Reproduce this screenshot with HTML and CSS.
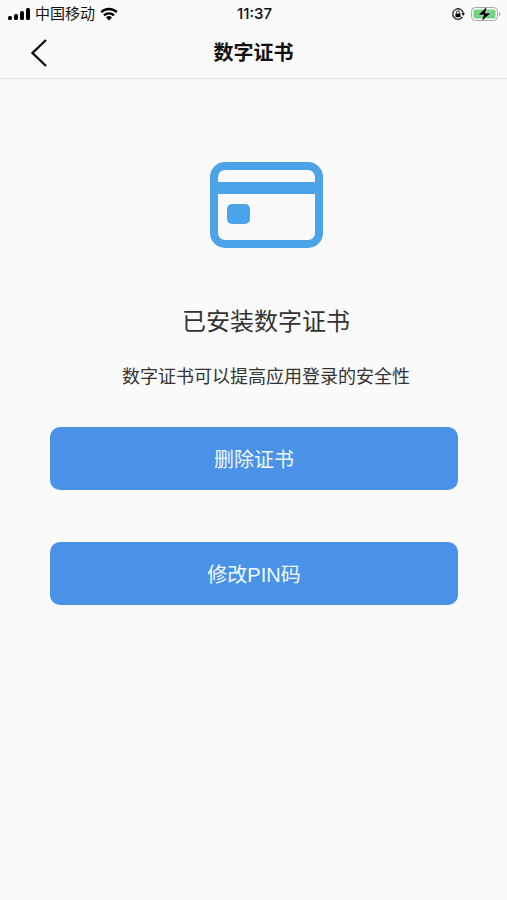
FILE: index.html
```html
<!DOCTYPE html>
<html lang="zh-CN">
<head>
  <meta charset="utf-8">
  <meta name="viewport" content="width=device-width, initial-scale=1.0">
  <title>数字证书</title>
  <link rel="stylesheet" href="styles.css">
</head>

<body>
  <header>
    <div class="status-bar">
      <div class="status-left">
        <svg width="22" height="14" viewBox="0 0 22 14" aria-hidden="true">
          <rect x="0" y="9" width="4" height="4" rx="1.5"/>
          <rect x="6" y="7" width="4" height="6" rx="1.5"/>
          <rect x="12" y="4" width="4" height="9" rx="1.5"/>
          <rect x="18" y="1" width="4" height="12" rx="1.5"/>
        </svg>
        <span class="carrier">中国移动</span>
        <svg width="18" height="14" viewBox="0 0 18 14" aria-hidden="true">
          <path d="M1.2 5.2A11.2 11.2 0 0 1 16.8 5.2M4 8.4A7.2 7.2 0 0 1 14 8.4" fill="none" stroke="#000" stroke-width="2.4"/>
          <path d="M9 13.4L6 10.4A4.3 4.3 0 0 1 12 10.4Z"/>
        </svg>
      </div>
      <span class="time">11:37</span>
      <div class="status-right">
        <svg width="14" height="14" viewBox="0 0 14 14" aria-hidden="true">
          <path d="M11.6 9.8A5.3 5.3 0 1 1 12.3 6.5" fill="none" stroke="#222" stroke-width="1.3"/>
          <path d="M10.4 6.2h3.6l-1.8 2.6z"/>
          <rect x="4.4" y="6.4" width="5.2" height="3.8" rx="0.5"/>
          <path d="M5.5 6.5V5.4a1.5 1.5 0 0 1 3 0v1.1" fill="none" stroke="#222"/>
        </svg>
        <svg width="30" height="16" viewBox="0 0 30 16" aria-hidden="true">
          <rect x="0.5" y="1.5" width="26" height="13" rx="4" fill="#fafafa" stroke="#a3a8a3"/>
          <rect x="2.5" y="3.5" width="22" height="9" rx="2" fill="#70d37e"/>
          <path d="M28 6v4q1.6-.6 1.6-2T28 6z" fill="#a3a8a3"/>
          <path d="M16 0.500L7 9h5.500L10.500 15.500L20 7h-5.500z" stroke="#fafafa" stroke-width="0.5"/>
        </svg>
      </div>
    </div>
    <nav>
      <button class="back" type="button" aria-label="返回">
        <svg width="18" height="30" viewBox="0 0 18 30" aria-hidden="true">
          <path d="M16 2L2.500 15L16 28" fill="none" stroke="#111" stroke-width="2.400"/>
        </svg>
      </button>
      <h1>数字证书</h1>
    </nav>
  </header>

  <main>
    <section class="certificate">
      <svg width="114" height="88" viewBox="0 0 114 88" aria-hidden="true">
        <rect x="5" y="5" width="105" height="78" rx="11" fill="none" stroke="#4ba3e8" stroke-width="8"/>
        <rect x="5" y="21" width="105" height="12" fill="#4ba3e8"/>
        <rect x="18" y="43" width="23" height="20" rx="5" fill="#4ba3e8"/>
      </svg>
      <h2>已安装数字证书</h2>
      <p>数字证书可以提高应用登录的安全性</p>
    </section>
    <div class="actions">
      <button class="action" type="button">删除证书</button>
      <button class="action" type="button">修改PIN码</button>
    </div>
  </main>
</body>
</html>
```

FILE: styles.css
```css
body {
  margin: 0;
  background-color: #fafafa;
  color: #333;
  font-family: "Liberation Sans", "Noto Sans CJK SC", sans-serif;
}

header {
  border-bottom: 1px solid #e5e5e5;
  color: #111;
}

.status-bar {
  display: grid;
  grid-template-columns: 1fr auto 1fr;
  align-items: center;
  height: 27px;
  padding: 0 6px 0 8px;
}

.status-left, .status-right {
  display: flex;
  align-items: center;
  gap: 5px;
}

.status-right {
  justify-content: flex-end;
  gap: 6px;
}

.carrier {
  font-size: 15px;
  line-height: 20px;
}

.time {
  font-family: Inter, sans-serif;
  font-size: 15px;
  font-weight: 500;
  line-height: 20px;
}

nav {
  display: grid;
  grid-template-columns: 60px 1fr 60px;
  align-items: center;
  height: 51px;
}

.back {
  display: flex;
  padding: 0 0 0 30px;
  border: 0;
  background: none;
}

h1, h2, p {
  margin: 0;
  text-align: center;
}

h1 {
  font-size: 20px;
  font-weight: 700;
  line-height: 28px;
}

.certificate {
  display: flex;
  flex-direction: column;
  align-items: center;
  padding: 82px 0 36px 25px;
}

h2 {
  margin-top: 55px;
  font-size: 24px;
  font-weight: 400;
  line-height: 36px;
}

p {
  margin-top: 23px;
  font-size: 18px;
  line-height: 28px;
}

.actions {
  display: flex;
  flex-direction: column;
  gap: 52px;
  padding: 0 49px 0 50px;
}

.action {
  height: 63px;
  border: 0;
  border-radius: 10px;
  background-color: #4a92e8;
  color: #f0fbff;
  font-family: inherit;
  font-size: 20px;
}
```
